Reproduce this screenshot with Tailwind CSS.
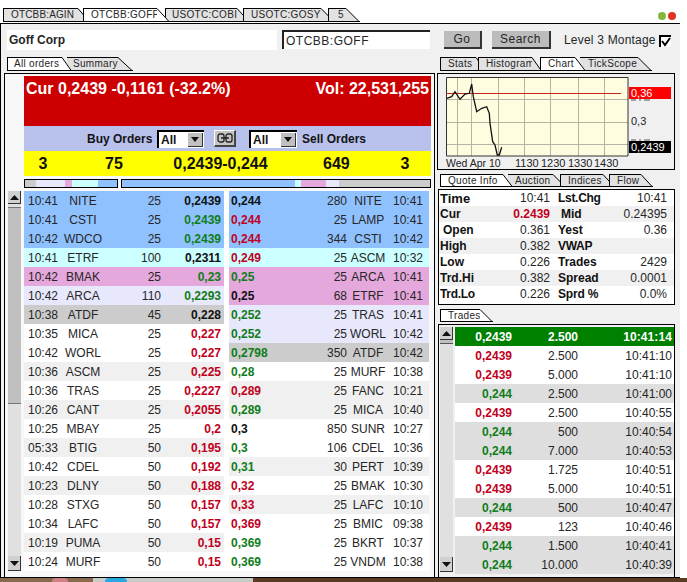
<!DOCTYPE html>
<html><head><meta charset="utf-8">
<script src="https://cdn.jsdelivr.net/npm/@tailwindcss/browser@4"></script>
</head>
<body class="m-0 bg-white">
<div class="w-[687px] h-[582px] overflow-hidden bg-white font-['Liberation_Sans',Arial,sans-serif] text-[12px] leading-none text-[#262626]">

<!-- window tabs -->
<div class="h-[23px] pt-[8px] pl-[3px] flex items-start text-[10px] tracking-[0.3px]">
  <div class="flex h-[14px] mr-[-7px]"><span class="w-[75px] pl-[7px] flex items-center bg-[#e2e2e2] border-l border-t border-b border-black tracking-[0.15px]">OTCBB:AGIN</span><svg class="w-[12px] h-[14px]" viewBox="0 0 12 14"><polygon points="0,0 12,14 0,14" fill="#e2e2e2"/><path d="M0 .5L11.5 14M0 13.5H12" stroke="#000" fill="none"/></svg></div>
  <div class="relative z-10 flex h-[14px] mr-[-5px]"><span class="w-[74px] pl-[7px] flex items-center bg-white border-l border-t border-b border-black">OTCBB:GOFF</span><svg class="w-[13px] h-[14px]" viewBox="0 0 13 14"><polygon points="0,0 13,14 0,14" fill="#fff"/><path d="M0 .5L12.5 14M0 13.5H13" stroke="#000" fill="none"/></svg></div>
  <div class="flex h-[14px] mr-[-7px]"><span class="w-[72px] pl-[6px] flex items-center bg-[#e2e2e2] border-l border-t border-b border-black">USOTC:COBI</span><svg class="w-[13px] h-[14px]" viewBox="0 0 13 14"><polygon points="0,0 13,14 0,14" fill="#e2e2e2"/><path d="M0 .5L12.5 14M0 13.5H13" stroke="#000" fill="none"/></svg></div>
  <div class="flex h-[14px] mr-[-7px]"><span class="w-[78px] pl-[7px] flex items-center bg-[#e2e2e2] border-l border-t border-b border-black">USOTC:GOSY</span><svg class="w-[14px] h-[14px]" viewBox="0 0 14 14"><polygon points="0,0 14,14 0,14" fill="#e2e2e2"/><path d="M0 .5L13.5 14M0 13.5H14" stroke="#000" fill="none"/></svg></div>
  <div class="flex h-[14px]"><span class="w-[18px] pl-[9px] flex items-center bg-[#e2e2e2] border-l border-t border-b border-black">5</span><svg class="w-[14px] h-[14px]" viewBox="0 0 14 14"><polygon points="0,0 14,14 0,14" fill="#e2e2e2"/><path d="M0 .5L13.5 14M0 13.5H14" stroke="#000" fill="none"/></svg></div>
  <div class="ml-[298px] mt-[4px] flex gap-[2px]"><span class="w-[8px] h-[8px] rounded-full bg-[#84b83c]"></span><span class="w-[8px] h-[8px] rounded-full bg-[#dd3322]"></span></div>
</div>

<!-- main window -->
<div class="w-[680px] h-[555px] border-t border-b border-l border-black bg-[#f0f0f0] flex flex-col">

  <!-- header -->
  <div class="h-[33px] pt-[6px] pl-[6px] flex items-start shrink-0">
    <div class="w-[270px] h-[20px] bg-white pl-[2px] flex items-center font-bold">Goff Corp</div>
    <div class="ml-[5px] w-[148px] h-[19px] bg-white border-l-2 border-t-2 border-[#222] pl-[2px] flex items-center tracking-[0.5px]">OTCBB:GOFF</div>
    <div class="ml-[14px] mt-[1px] w-[38px] h-[18px] bg-[#bcbcbc] border-r-2 border-b-2 border-[#333] flex items-center justify-center tracking-[0.5px]">Go</div>
    <div class="ml-[10px] mt-[1px] w-[59px] h-[18px] bg-[#bcbcbc] border-r-2 border-b-2 border-[#333] flex items-center justify-center tracking-[0.5px]">Search</div>
    <div class="ml-[13px] h-[19px] flex items-center tracking-[0.2px]">Level 3 Montage</div>
    <div class="ml-[3px] mt-[5px] w-[12px] h-[12px] bg-white border-l-2 border-t-2 border-black flex items-center justify-center"><svg class="w-[10px] h-[10px]" viewBox="0 0 10 10"><path d="M1 4L4 8L9 1" stroke="#000" stroke-width="2" fill="none"/></svg></div>
  </div>

  <!-- body -->
  <div class="flex flex-1 min-h-0">

    <!-- left column -->
    <div class="ml-[3px] w-[431px] flex flex-col shrink-0">
      <div class="h-[16px] pl-[3px] flex items-start text-[10px] tracking-[0.3px] shrink-0">
        <div class="relative z-10 flex h-[14px] mr-[-5px]"><span class="w-[55px] pl-[6px] flex items-center bg-white border-l border-t border-b border-black">All orders</span><svg class="w-[10px] h-[14px]" viewBox="0 0 10 14"><polygon points="0,0 10,14 0,14" fill="#fff"/><path d="M0 .5L9.5 14M0 13.5H10" stroke="#000" fill="none"/></svg></div>
        <div class="flex h-[14px]"><span class="w-[51px] pl-[6px] flex items-center bg-[#e2e2e2] border-t border-b border-black">Summary</span><svg class="w-[15px] h-[14px]" viewBox="0 0 15 14"><polygon points="0,0 15,14 0,14" fill="#e2e2e2"/><path d="M0 .5L14.5 14M0 13.5H15" stroke="#000" fill="none"/></svg></div>
      </div>
      <div class="flex-1 min-h-0 bg-[#f8f8f8] border-l border-t border-r border-black pt-[2px] flex flex-col">
        <div class="ml-[19px] w-[407px] shrink-0">
          <div class="h-[50px] bg-[#cc0000] text-white font-bold text-[16px] px-[2px] pt-[5px] flex justify-between items-start"><span>Cur 0,2439 -0,1161 (-32.2%)</span><span>Vol: 22,531,255</span></div>
          <div class="h-[25px] bg-[#b8c0ec] flex items-center font-bold text-[#141414]">
            <span class="ml-[63px] w-[64px] shrink-0 whitespace-nowrap">Buy Orders</span>
            <div class="ml-[6px] w-[47px] h-[18px] shrink-0 bg-white border-l-2 border-t-2 border-black flex items-center justify-between pl-[2px] pr-[1px]"><span>All</span><span class="w-[15px] h-[14px] bg-[#c0c0c0] border-r border-b border-[#333] flex items-center justify-center"><svg class="w-[8px] h-[5px]" viewBox="0 0 8 5"><path d="M0 0H8L4 5Z" fill="#111"/></svg></span></div>
            <div class="ml-[10px] w-[22px] h-[17px] shrink-0 bg-[#c4c4c4] border-l border-t border-white border-r-2 border-b-2 border-r-[#444] border-b-[#444] flex items-center justify-center"><svg class="w-[16px] h-[10px]" viewBox="0 0 16 10"><rect x="1" y="1" width="6" height="8" rx="2" fill="none" stroke="#222" stroke-width="1.3"/><rect x="9" y="1" width="6" height="8" rx="2" fill="none" stroke="#222" stroke-width="1.3"/><path d="M4 5H12" stroke="#222" stroke-width="1.5"/></svg></div>
            <div class="ml-[13px] w-[48px] h-[18px] shrink-0 bg-white border-l-2 border-t-2 border-black flex items-center justify-between pl-[2px] pr-[1px]"><span>All</span><span class="w-[15px] h-[14px] bg-[#c0c0c0] border-r border-b border-[#333] flex items-center justify-center"><svg class="w-[8px] h-[5px]" viewBox="0 0 8 5"><path d="M0 0H8L4 5Z" fill="#111"/></svg></span></div>
            <span class="ml-[5px] whitespace-nowrap">Sell Orders</span>
          </div>
          <div class="h-[25px] bg-[#ffff00] flex items-center text-[16px] font-bold text-[#111]">
            <span class="w-[28px] text-center ml-[5px]">3</span>
            <span class="w-[50px] ml-[32px] text-center">75</span>
            <span class="ml-[34px] w-[95px] text-center whitespace-nowrap">0,2439-0,244</span>
            <span class="ml-[55px] w-[26px] text-center">649</span>
            <span class="ml-[43px] w-[26px] text-center">3</span>
          </div>
          <div class="h-[15px] pt-[3px] flex items-start">
            <div class="w-[94px] h-[9px] border border-black flex bg-[#8fc1ff]"><span class="w-[11px] bg-[#cccccc]"></span><span class="w-[29px] bg-[#e8e8fc]"></span><span class="w-[7px] bg-[#e5a8dc]"></span><span class="w-[26px] bg-[#ccffff]"></span><span class="flex-1"></span></div>
            <div class="ml-[3px] w-[310px] h-[9px] border border-black flex bg-[#cccccc]"><span class="w-[173px] bg-[#8fc1ff]"></span><span class="w-[6px] bg-[#ccffff]"></span><span class="w-[25px] bg-[#e5a8dc]"></span><span class="w-[13px] bg-[#e8e8fc]"></span></div>
          </div>
        </div>

        <div class="flex items-start">
          <!-- scrollbar -->
          <div class="ml-[3px] w-[13px] h-[380px] bg-[#e0e0e0] flex flex-col shrink-0">
            <div class="h-[13px] bg-[#d0d0d0] border-r border-b border-[#333] flex items-center justify-center shrink-0"><svg class="w-[9px] h-[5px]" viewBox="0 0 9 5"><path d="M0 5H9L4.500 0Z" fill="#111"/></svg></div>
            <div class="mt-[3px] h-[197px] bg-[#c0c0c0] border-t border-b border-[#777] shrink-0"></div>
            <div class="mt-auto h-[15px] bg-[#d0d0d0] border-r border-b border-[#333] flex items-center justify-center shrink-0"><svg class="w-[9px] h-[5px]" viewBox="0 0 9 5"><path d="M0 0H9L4.500 5Z" fill="#111"/></svg></div>
          </div>
          <!-- orders -->
          <div class="ml-[3px] flex gap-[5px] bg-white">
            <div class="w-[200px] flex flex-col">
              <div class="h-[19px] flex items-center bg-[#8fc1ff]"><span class="w-[38px] pl-[4px]">10:41</span><span class="w-[42px] text-center">NITE</span><span class="w-[57px] text-right">25</span><span class="w-[60px] text-right font-bold text-[#111]">0,2439</span></div>
              <div class="h-[19px] flex items-center bg-[#8fc1ff]"><span class="w-[38px] pl-[4px]">10:41</span><span class="w-[42px] text-center">CSTI</span><span class="w-[57px] text-right">25</span><span class="w-[60px] text-right font-bold text-[#0f7d1a]">0,2439</span></div>
              <div class="h-[19px] flex items-center bg-[#8fc1ff]"><span class="w-[38px] pl-[4px]">10:42</span><span class="w-[42px] text-center">WDCO</span><span class="w-[57px] text-right">25</span><span class="w-[60px] text-right font-bold text-[#0f7d1a]">0,2439</span></div>
              <div class="h-[19px] flex items-center bg-[#ccffff]"><span class="w-[38px] pl-[4px]">10:41</span><span class="w-[42px] text-center">ETRF</span><span class="w-[57px] text-right">100</span><span class="w-[60px] text-right font-bold text-[#111]">0,2311</span></div>
              <div class="h-[19px] flex items-center bg-[#e5a8dc]"><span class="w-[38px] pl-[4px]">10:42</span><span class="w-[42px] text-center">BMAK</span><span class="w-[57px] text-right">25</span><span class="w-[60px] text-right font-bold text-[#0f7d1a]">0,23</span></div>
              <div class="h-[19px] flex items-center bg-[#e8e8fc]"><span class="w-[38px] pl-[4px]">10:42</span><span class="w-[42px] text-center">ARCA</span><span class="w-[57px] text-right">110</span><span class="w-[60px] text-right font-bold text-[#0f7d1a]">0,2293</span></div>
              <div class="h-[19px] flex items-center bg-[#cccccc]"><span class="w-[38px] pl-[4px]">10:38</span><span class="w-[42px] text-center">ATDF</span><span class="w-[57px] text-right">45</span><span class="w-[60px] text-right font-bold text-[#111]">0,228</span></div>
              <div class="h-[19px] flex items-center bg-white"><span class="w-[38px] pl-[4px]">10:35</span><span class="w-[42px] text-center">MICA</span><span class="w-[57px] text-right">25</span><span class="w-[60px] text-right font-bold text-[#c00020]">0,227</span></div>
              <div class="h-[19px] flex items-center bg-white"><span class="w-[38px] pl-[4px]">10:42</span><span class="w-[42px] text-center">WORL</span><span class="w-[57px] text-right">25</span><span class="w-[60px] text-right font-bold text-[#c00020]">0,227</span></div>
              <div class="h-[19px] flex items-center bg-[#f0f0f0]"><span class="w-[38px] pl-[4px]">10:36</span><span class="w-[42px] text-center">ASCM</span><span class="w-[57px] text-right">25</span><span class="w-[60px] text-right font-bold text-[#c00020]">0,225</span></div>
              <div class="h-[19px] flex items-center bg-white"><span class="w-[38px] pl-[4px]">10:36</span><span class="w-[42px] text-center">TRAS</span><span class="w-[57px] text-right">25</span><span class="w-[60px] text-right font-bold text-[#c00020]">0,2227</span></div>
              <div class="h-[19px] flex items-center bg-[#f0f0f0]"><span class="w-[38px] pl-[4px]">10:26</span><span class="w-[42px] text-center">CANT</span><span class="w-[57px] text-right">25</span><span class="w-[60px] text-right font-bold text-[#c00020]">0,2055</span></div>
              <div class="h-[19px] flex items-center bg-white"><span class="w-[38px] pl-[4px]">10:25</span><span class="w-[42px] text-center">MBAY</span><span class="w-[57px] text-right">25</span><span class="w-[60px] text-right font-bold text-[#c00020]">0,2</span></div>
              <div class="h-[19px] flex items-center bg-[#f0f0f0]"><span class="w-[38px] pl-[4px]">05:33</span><span class="w-[42px] text-center">BTIG</span><span class="w-[57px] text-right">50</span><span class="w-[60px] text-right font-bold text-[#c00020]">0,195</span></div>
              <div class="h-[19px] flex items-center bg-white"><span class="w-[38px] pl-[4px]">10:42</span><span class="w-[42px] text-center">CDEL</span><span class="w-[57px] text-right">50</span><span class="w-[60px] text-right font-bold text-[#c00020]">0,192</span></div>
              <div class="h-[19px] flex items-center bg-[#f0f0f0]"><span class="w-[38px] pl-[4px]">10:23</span><span class="w-[42px] text-center">DLNY</span><span class="w-[57px] text-right">50</span><span class="w-[60px] text-right font-bold text-[#c00020]">0,188</span></div>
              <div class="h-[19px] flex items-center bg-white"><span class="w-[38px] pl-[4px]">10:28</span><span class="w-[42px] text-center">STXG</span><span class="w-[57px] text-right">50</span><span class="w-[60px] text-right font-bold text-[#c00020]">0,157</span></div>
              <div class="h-[19px] flex items-center bg-white"><span class="w-[38px] pl-[4px]">10:34</span><span class="w-[42px] text-center">LAFC</span><span class="w-[57px] text-right">50</span><span class="w-[60px] text-right font-bold text-[#c00020]">0,157</span></div>
              <div class="h-[19px] flex items-center bg-[#f0f0f0]"><span class="w-[38px] pl-[4px]">10:19</span><span class="w-[42px] text-center">PUMA</span><span class="w-[57px] text-right">50</span><span class="w-[60px] text-right font-bold text-[#c00020]">0,15</span></div>
              <div class="h-[19px] flex items-center bg-white"><span class="w-[38px] pl-[4px]">10:24</span><span class="w-[42px] text-center">MURF</span><span class="w-[57px] text-right">50</span><span class="w-[60px] text-right font-bold text-[#c00020]">0,15</span></div>
            </div>
            <div class="w-[200px] flex flex-col">
              <div class="h-[19px] flex items-center bg-[#8fc1ff]"><span class="w-[60px] pl-[2px] font-bold text-[#111]">0,244</span><span class="w-[58px] text-right">280</span><span class="w-[42px] text-center">NITE</span><span class="w-[34px] text-right">10:41</span></div>
              <div class="h-[19px] flex items-center bg-[#8fc1ff]"><span class="w-[60px] pl-[2px] font-bold text-[#c00020]">0,244</span><span class="w-[58px] text-right">25</span><span class="w-[42px] text-center">LAMP</span><span class="w-[34px] text-right">10:41</span></div>
              <div class="h-[19px] flex items-center bg-[#8fc1ff]"><span class="w-[60px] pl-[2px] font-bold text-[#c00020]">0,244</span><span class="w-[58px] text-right">344</span><span class="w-[42px] text-center">CSTI</span><span class="w-[34px] text-right">10:42</span></div>
              <div class="h-[19px] flex items-center bg-[#ccffff]"><span class="w-[60px] pl-[2px] font-bold text-[#c00020]">0,249</span><span class="w-[58px] text-right">25</span><span class="w-[42px] text-center">ASCM</span><span class="w-[34px] text-right">10:32</span></div>
              <div class="h-[19px] flex items-center bg-[#e5a8dc]"><span class="w-[60px] pl-[2px] font-bold text-[#0f7d1a]">0,25</span><span class="w-[58px] text-right">25</span><span class="w-[42px] text-center">ARCA</span><span class="w-[34px] text-right">10:41</span></div>
              <div class="h-[19px] flex items-center bg-[#e5a8dc]"><span class="w-[60px] pl-[2px] font-bold text-[#111]">0,25</span><span class="w-[58px] text-right">68</span><span class="w-[42px] text-center">ETRF</span><span class="w-[34px] text-right">10:41</span></div>
              <div class="h-[19px] flex items-center bg-[#e8e8fc]"><span class="w-[60px] pl-[2px] font-bold text-[#0f7d1a]">0,252</span><span class="w-[58px] text-right">25</span><span class="w-[42px] text-center">TRAS</span><span class="w-[34px] text-right">10:41</span></div>
              <div class="h-[19px] flex items-center bg-[#e8e8fc]"><span class="w-[60px] pl-[2px] font-bold text-[#0f7d1a]">0,252</span><span class="w-[58px] text-right">25</span><span class="w-[42px] text-center">WORL</span><span class="w-[34px] text-right">10:42</span></div>
              <div class="h-[19px] flex items-center bg-[#cccccc]"><span class="w-[60px] pl-[2px] font-bold text-[#0f7d1a]">0,2798</span><span class="w-[58px] text-right">350</span><span class="w-[42px] text-center">ATDF</span><span class="w-[34px] text-right">10:42</span></div>
              <div class="h-[19px] flex items-center bg-white"><span class="w-[60px] pl-[2px] font-bold text-[#0f7d1a]">0,28</span><span class="w-[58px] text-right">25</span><span class="w-[42px] text-center">MURF</span><span class="w-[34px] text-right">10:38</span></div>
              <div class="h-[19px] flex items-center bg-[#f0f0f0]"><span class="w-[60px] pl-[2px] font-bold text-[#c00020]">0,289</span><span class="w-[58px] text-right">25</span><span class="w-[42px] text-center">FANC</span><span class="w-[34px] text-right">10:21</span></div>
              <div class="h-[19px] flex items-center bg-[#f0f0f0]"><span class="w-[60px] pl-[2px] font-bold text-[#0f7d1a]">0,289</span><span class="w-[58px] text-right">25</span><span class="w-[42px] text-center">MICA</span><span class="w-[34px] text-right">10:40</span></div>
              <div class="h-[19px] flex items-center bg-white"><span class="w-[60px] pl-[2px] font-bold text-[#111]">0,3</span><span class="w-[58px] text-right">850</span><span class="w-[42px] text-center">SUNR</span><span class="w-[34px] text-right">10:27</span></div>
              <div class="h-[19px] flex items-center bg-white"><span class="w-[60px] pl-[2px] font-bold text-[#0f7d1a]">0,3</span><span class="w-[58px] text-right">106</span><span class="w-[42px] text-center">CDEL</span><span class="w-[34px] text-right">10:36</span></div>
              <div class="h-[19px] flex items-center bg-[#f0f0f0]"><span class="w-[60px] pl-[2px] font-bold text-[#0f7d1a]">0,31</span><span class="w-[58px] text-right">30</span><span class="w-[42px] text-center">PERT</span><span class="w-[34px] text-right">10:39</span></div>
              <div class="h-[19px] flex items-center bg-white"><span class="w-[60px] pl-[2px] font-bold text-[#c00020]">0,32</span><span class="w-[58px] text-right">25</span><span class="w-[42px] text-center">BMAK</span><span class="w-[34px] text-right">10:30</span></div>
              <div class="h-[19px] flex items-center bg-[#f0f0f0]"><span class="w-[60px] pl-[2px] font-bold text-[#c00020]">0,33</span><span class="w-[58px] text-right">25</span><span class="w-[42px] text-center">LAFC</span><span class="w-[34px] text-right">10:10</span></div>
              <div class="h-[19px] flex items-center bg-white"><span class="w-[60px] pl-[2px] font-bold text-[#c00020]">0,369</span><span class="w-[58px] text-right">25</span><span class="w-[42px] text-center">BMIC</span><span class="w-[34px] text-right">09:38</span></div>
              <div class="h-[19px] flex items-center bg-white"><span class="w-[60px] pl-[2px] font-bold text-[#0f7d1a]">0,369</span><span class="w-[58px] text-right">25</span><span class="w-[42px] text-center">BKRT</span><span class="w-[34px] text-right">10:37</span></div>
              <div class="h-[19px] flex items-center bg-white"><span class="w-[60px] pl-[2px] font-bold text-[#0f7d1a]">0,369</span><span class="w-[58px] text-right">25</span><span class="w-[42px] text-center">VNDM</span><span class="w-[34px] text-right">10:38</span></div>
            </div>
          </div>
        </div>
      </div>
    </div>

    <!-- right column -->
    <div class="ml-[2px] w-[238px] flex flex-col shrink-0">
      <div class="h-[16px] pl-[3px] flex items-start text-[10px] tracking-[0.3px] shrink-0">
        <div class="flex h-[14px] mr-[-8px]"><span class="w-[36px] pl-[7px] flex items-center bg-[#e2e2e2] border-l border-t border-b border-black">Stats</span><svg class="w-[10px] h-[14px]" viewBox="0 0 10 14"><polygon points="0,0 10,14 0,14" fill="#e2e2e2"/><path d="M0 .5L9.5 14M0 13.5H10" stroke="#000" fill="none"/></svg></div>
        <div class="flex h-[14px] mr-[-2px]"><span class="w-[54px] pl-[7px] flex items-center bg-[#e2e2e2] border-l border-t border-b border-black">Histogram</span><svg class="w-[10px] h-[14px]" viewBox="0 0 10 14"><polygon points="0,0 10,14 0,14" fill="#e2e2e2"/><path d="M0 .5L9.5 14M0 13.5H10" stroke="#000" fill="none"/></svg></div>
        <div class="relative z-10 flex h-[14px] mr-[-6px]"><span class="w-[35px] pl-[7px] flex items-center bg-white border-l border-t border-b border-black">Chart</span><svg class="w-[11px] h-[14px]" viewBox="0 0 11 14"><polygon points="0,0 11,14 0,14" fill="#fff"/><path d="M0 .5L10.500 14M0 13.500H11" stroke="#000" fill="none"/></svg></div>
        <div class="flex h-[14px]"><span class="w-[58px] pl-[8px] flex items-center bg-[#e2e2e2] border-t border-b border-black">TickScope</span><svg class="w-[14px] h-[14px]" viewBox="0 0 14 14"><polygon points="0,0 14,14 0,14" fill="#e2e2e2"/><path d="M0 .5L13.500 14M0 13.500H14" stroke="#000" fill="none"/></svg></div>
      </div>

      <div class="h-[97px] border border-black bg-[#f0f0f0] shrink-0">
        <svg class="block w-[236px] h-[95px]" viewBox="438 74 236 95" font-family="Liberation Sans, Arial, sans-serif" font-size="11">
          <rect x="446" y="78" width="182" height="78" fill="#fffde0"/>
          <path d="M457.500 78V156M471.500 78V156M498.500 78V156M524.500 78V156M550.500 78V156M578.500 78V156M604.500 78V156M446 99.500H628M446 122.500H628M446 144.500H628" stroke="#b4b4a4" fill="none"/>
          <path d="M446.500 77.500H628V156M446.500 77.500V156H628" stroke="#333" fill="none"/>
          <path d="M446 93.500H621" stroke="#cc2020" fill="none"/>
          <polyline points="446.700,98.300 451.700,96.700 455,91.700 460,99.300 465,94 469.300,93.300 471.700,84 473.300,96.700 476.700,111.700 481.700,108.300 486.700,106.700 489.300,113.300 490,123.300 492.700,141.700 495,145 497.300,155 499.300,155 501.700,147.300" fill="none" stroke="#111" stroke-width="1.300"/>
          <text x="446" y="167" fill="#222" font-size="10.500">Wed Apr 10</text>
          <text x="515" y="167" fill="#222">1130</text><text x="541" y="167" fill="#222">1230</text><text x="568" y="167" fill="#222">1330</text><text x="594" y="167" fill="#222">1430</text>
          <path d="M631 100H636M639 100H641M644 100H650" stroke="#555" fill="none"/>
          <rect x="629" y="87" width="42" height="12" fill="#ff0000"/>
          <text x="631" y="97" fill="#fff" font-size="11">0,36</text>
          <text x="631" y="125" fill="#222" font-size="11">0,3</text>
          <path d="M631 140H636M639 140H641M644 140H650" stroke="#555" fill="none"/>
          <rect x="629" y="141" width="42" height="12" fill="#000"/>
          <text x="631" y="151" fill="#fff" font-size="11">0,2439</text>
        </svg>
      </div>

      <div class="mt-[4px] h-[13px] pl-[3px] flex items-start text-[10px] tracking-[0.3px] shrink-0">
        <div class="relative z-10 flex h-[13px] mr-[-5px]"><span class="w-[63px] pl-[7px] flex items-center bg-white border-l border-t border-b border-black">Quote Info</span><svg class="w-[10px] h-[13px]" viewBox="0 0 10 13"><polygon points="0,0 10,13 0,13" fill="#fff"/><path d="M0 .5L9.500 13M0 12.500H10" stroke="#000" fill="none"/></svg></div>
        <div class="flex h-[13px] mr-[-6px]"><span class="w-[45px] pl-[7px] flex items-center bg-[#e2e2e2] border-t border-b border-black">Auction</span><svg class="w-[13px] h-[13px]" viewBox="0 0 13 13"><polygon points="0,0 13,13 0,13" fill="#e2e2e2"/><path d="M0 .5L12.500 13M0 12.500H13" stroke="#000" fill="none"/></svg></div>
        <div class="flex h-[13px] mr-[-6px]"><span class="w-[43px] pl-[7px] flex items-center bg-[#e2e2e2] border-l border-t border-b border-black">Indices</span><svg class="w-[12px] h-[13px]" viewBox="0 0 12 13"><polygon points="0,0 12,13 0,13" fill="#e2e2e2"/><path d="M0 .5L11.500 13M0 12.500H12" stroke="#000" fill="none"/></svg></div>
        <div class="flex h-[13px]"><span class="w-[32px] pl-[7px] flex items-center bg-[#e2e2e2] border-l border-t border-b border-black">Flow</span><svg class="w-[12px] h-[13px]" viewBox="0 0 12 13"><polygon points="0,0 12,13 0,13" fill="#e2e2e2"/><path d="M0 .5L11.500 13M0 12.500H12" stroke="#000" fill="none"/></svg></div>
      </div>

      <div class="mt-[2px] ml-[1px] w-[237px] h-[116px] border border-black bg-white shrink-0">
        <div class="h-[16px] flex items-center bg-white"><span class="w-[56px] pl-[1px] font-bold text-[13px] text-[#111]">Time</span><span class="w-[55px] text-right">10:41</span><span class="w-[62px] pl-[8px] font-bold tracking-[-0.3px] text-[#111]">Lst.Chg</span><span class="w-[55px] text-right">10:41</span></div>
        <div class="h-[16px] flex items-center bg-[#f0f0f0]"><span class="w-[56px] pl-[1px] font-bold text-[#111]">Cur</span><span class="w-[55px] text-right font-bold text-[#c00020]">0.2439</span><span class="w-[62px] pl-[11px] font-bold text-[#111]">Mid</span><span class="w-[55px] text-right">0.24395</span></div>
        <div class="h-[16px] flex items-center bg-white"><span class="w-[56px] pl-[4px] font-bold text-[#111]">Open</span><span class="w-[55px] text-right">0.361</span><span class="w-[62px] pl-[8px] font-bold text-[#111]">Yest</span><span class="w-[55px] text-right">0.36</span></div>
        <div class="h-[16px] flex items-center bg-[#f0f0f0]"><span class="w-[56px] pl-[1px] font-bold text-[#111]">High</span><span class="w-[55px] text-right">0.382</span><span class="w-[62px] pl-[8px] font-bold tracking-[-0.3px] text-[#111]">VWAP</span><span class="w-[55px] text-right"></span></div>
        <div class="h-[16px] flex items-center bg-white"><span class="w-[56px] pl-[1px] font-bold text-[#111]">Low</span><span class="w-[55px] text-right">0.226</span><span class="w-[62px] pl-[8px] font-bold text-[#111]">Trades</span><span class="w-[55px] text-right">2429</span></div>
        <div class="h-[16px] flex items-center bg-[#f0f0f0]"><span class="w-[56px] pl-[1px] font-bold text-[#111]">Trd.Hi</span><span class="w-[55px] text-right">0.382</span><span class="w-[62px] pl-[8px] font-bold text-[#111]">Spread</span><span class="w-[55px] text-right">0.0001</span></div>
        <div class="h-[16px] flex items-center bg-white"><span class="w-[56px] pl-[1px] font-bold tracking-[-0.3px] text-[#111]">Trd.Lo</span><span class="w-[55px] text-right">0.226</span><span class="w-[62px] pl-[8px] font-bold tracking-[-0.2px] text-[#111]">Sprd %</span><span class="w-[55px] text-right">0.0%</span></div>
      </div>

      <div class="mt-[4px] h-[13px] pl-[3px] flex items-start text-[10px] tracking-[0.3px] shrink-0">
        <div class="flex h-[13px]"><span class="w-[40px] pl-[7px] flex items-center bg-white border-l border-t border-b border-black">Trades</span><svg class="w-[13px] h-[13px]" viewBox="0 0 13 13"><polygon points="0,0 13,13 0,13" fill="#fff"/><path d="M0 .5L12.500 13M0 12.500H13" stroke="#000" fill="none"/></svg></div>
      </div>

      <div class="mt-[2px] ml-[1px] w-[237px] flex-1 min-h-0 border-l border-t border-r border-black bg-[#f0f0f0] pt-[2px] flex items-start">
        <div class="ml-[1px] w-[13px] h-[245px] bg-[#e0e0e0] flex flex-col shrink-0">
          <div class="h-[13px] bg-[#d0d0d0] border-r border-b border-[#333] flex items-center justify-center shrink-0"><svg class="w-[9px] h-[5px]" viewBox="0 0 9 5"><path d="M0 5H9L4.500 0Z" fill="#111"/></svg></div>
          <div class="h-[4px] bg-[#c0c0c0] border-b border-[#555] shrink-0"></div>
          <div class="mt-auto h-[15px] bg-[#d0d0d0] border-r border-b border-[#333] flex items-center justify-center shrink-0"><svg class="w-[9px] h-[5px]" viewBox="0 0 9 5"><path d="M0 0H9L4.500 5Z" fill="#111"/></svg></div>
        </div>
        <div class="ml-[2px] w-[219px] flex flex-col shrink-0">
          <div class="h-[19px] flex items-center bg-[#008000] text-white font-bold"><span class="w-[57px] text-right">0,2439</span><span class="w-[66px] text-right">2.500</span><span class="w-[94px] text-right tracking-[0.1px]">10:41:14</span></div>
          <div class="h-[19px] flex items-center bg-white"><span class="w-[57px] text-right font-bold text-[#c00020]">0,2439</span><span class="w-[66px] text-right">2.500</span><span class="w-[94px] text-right">10:41:10</span></div>
          <div class="h-[19px] flex items-center bg-white"><span class="w-[57px] text-right font-bold text-[#c00020]">0,2439</span><span class="w-[66px] text-right">5.000</span><span class="w-[94px] text-right">10:41:10</span></div>
          <div class="h-[19px] flex items-center bg-[#dedede]"><span class="w-[57px] text-right font-bold text-[#0f7d1a]">0,244</span><span class="w-[66px] text-right">2.500</span><span class="w-[94px] text-right">10:41:00</span></div>
          <div class="h-[19px] flex items-center bg-white"><span class="w-[57px] text-right font-bold text-[#c00020]">0,2439</span><span class="w-[66px] text-right">2.500</span><span class="w-[94px] text-right">10:40:55</span></div>
          <div class="h-[19px] flex items-center bg-[#dedede]"><span class="w-[57px] text-right font-bold text-[#0f7d1a]">0,244</span><span class="w-[66px] text-right">500</span><span class="w-[94px] text-right">10:40:54</span></div>
          <div class="h-[19px] flex items-center bg-[#dedede]"><span class="w-[57px] text-right font-bold text-[#0f7d1a]">0,244</span><span class="w-[66px] text-right">7.000</span><span class="w-[94px] text-right">10:40:53</span></div>
          <div class="h-[19px] flex items-center bg-white"><span class="w-[57px] text-right font-bold text-[#c00020]">0,2439</span><span class="w-[66px] text-right">1.725</span><span class="w-[94px] text-right">10:40:51</span></div>
          <div class="h-[19px] flex items-center bg-white"><span class="w-[57px] text-right font-bold text-[#c00020]">0,2439</span><span class="w-[66px] text-right">5.000</span><span class="w-[94px] text-right">10:40:51</span></div>
          <div class="h-[19px] flex items-center bg-[#dedede]"><span class="w-[57px] text-right font-bold text-[#0f7d1a]">0,244</span><span class="w-[66px] text-right">500</span><span class="w-[94px] text-right">10:40:47</span></div>
          <div class="h-[19px] flex items-center bg-white"><span class="w-[57px] text-right font-bold text-[#c00020]">0,2439</span><span class="w-[66px] text-right">123</span><span class="w-[94px] text-right">10:40:46</span></div>
          <div class="h-[19px] flex items-center bg-[#dedede]"><span class="w-[57px] text-right font-bold text-[#0f7d1a]">0,244</span><span class="w-[66px] text-right">1.500</span><span class="w-[94px] text-right">10:40:41</span></div>
          <div class="h-[19px] flex items-center bg-[#dedede]"><span class="w-[57px] text-right font-bold text-[#0f7d1a]">0,244</span><span class="w-[66px] text-right">10.000</span><span class="w-[94px] text-right">10:40:39</span></div>
        </div>
      </div>
    </div>
  </div>
</div>

<!-- taskbar sliver -->
<div class="h-[4px] flex bg-[#5c3a20]">
  <div class="w-[93px] bg-[#8a6a4c] flex"><span class="ml-[52px] w-[16px] h-[4px] bg-[#d08088] rounded-t-full"></span></div>
  <div class="w-[160px] bg-[#c8ccc8] flex"><span class="ml-[12px] w-[22px] h-[4px] bg-[#28a8e0] rounded-t-full"></span></div>
</div>
</div>
</body></html>
